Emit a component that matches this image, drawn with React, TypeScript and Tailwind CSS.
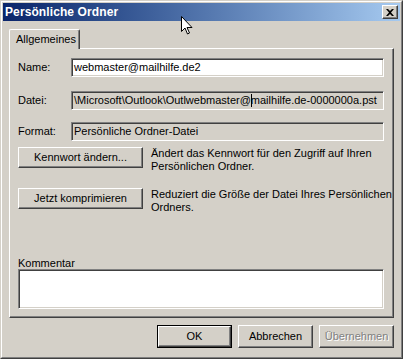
import React from "react"

const sunken =
  "border border-t-[#808080] border-l-[#808080] border-b-white border-r-white shadow-[inset_1px_1px_0_#404040,inset_-1px_-1px_0_#d4d0c8]"
const raised =
  "border border-t-white border-l-white border-b-[#404040] border-r-[#404040] shadow-[inset_-1px_-1px_0_#808080]"

const Field = ({ label, value, white }: { label: string; value: React.ReactNode; white?: boolean }) => (
  <div className="flex items-center h-[19px]">
    <div className="w-[53px] shrink-0">{label}</div>
    <div
      className={`flex-1 h-[19px] flex items-center pl-[2px] overflow-hidden whitespace-nowrap ${sunken} ${
        white ? "bg-white" : "bg-[#d4d0c8]"
      }`}
    >
      {value}
    </div>
  </div>
)

const ActionRow = ({ btn, text }: { btn: string; text: React.ReactNode }) => (
  <div className="flex items-start">
    <button className={`w-[125px] h-[21px] shrink-0 bg-[#d4d0c8] ${raised}`}>{btn}</button>
    <p className="ml-[8px] leading-[13px] whitespace-nowrap">{text}</p>
  </div>
)

const App = () => {
  return (
    <div
      className="w-[403px] h-[359px] bg-[#d4d0c8] border border-t-[#d4d0c8] border-l-[#d4d0c8] border-r-[#404040] border-b-[#404040] text-[11px] text-black relative"
      style={{ fontFamily: '"Liberation Sans", Arial, sans-serif' }}
    >
      <div className="w-full h-full border border-t-white border-l-white border-r-[#808080] border-b-[#808080] p-px flex flex-col">
        {/* title bar */}
        <div className="h-[18px] shrink-0 flex items-center justify-between pl-[2px] pr-[2px] bg-gradient-to-r from-[#0a246a] to-[#a6caf0]">
          <span className="text-white font-bold text-[12px] tracking-[0.1px]">Persönliche Ordner</span>
          <div className={`w-[16px] h-[14px] bg-[#d4d0c8] flex items-center justify-center ${raised}`}>
            <svg width="8" height="7" viewBox="0 0 8 7">
              <path d="M0 0h2l2 2 2-2h2L5 3.5 8 7H6L4 5 2 7H0l3-3.5z" fill="#000" />
            </svg>
          </div>
        </div>

        {/* tabs */}
        <div className="mt-[8px] px-[6px] flex flex-col">
          <div className="flex">
            <div className="relative z-10 -mb-px w-[71px] h-[20px] bg-[#d4d0c8] border border-b-0 border-t-white border-l-white border-r-[#404040] rounded-t-[2px] shadow-[inset_-1px_0_0_#808080] flex items-center pl-[6px]">
              Allgemeines
            </div>
          </div>
          <div className="h-[270px] w-[385px] border border-t-white border-l-white border-r-[#404040] border-b-[#404040] shadow-[inset_-1px_-1px_0_#808080] pl-[8px] pr-[9px] pt-[9px] flex flex-col">
            <Field label="Name:" value="webmaster@mailhilfe.de2" white />
            <div className="mt-[14px]">
              <Field
                label="Datei:"
                value={
                  <>
                    \Microsoft\Outlook\Outlwebmaster@
                    <span className="inline-block w-px h-[13px] bg-black -mr-px" />
                    mailhilfe.de-0000000a.pst
                  </>
                }
              />
            </div>
            <div className="mt-[12px]">
              <Field label="Format:" value="Persönliche Ordner-Datei" />
            </div>
            <div className="mt-[6px]">
              <ActionRow
                btn="Kennwort ändern..."
                text={
                  <>
                    Ändert das Kennwort für den Zugriff auf Ihren
                    <br />
                    Persönlichen Ordner.
                  </>
                }
              />
            </div>
            <div className="mt-[15px]">
              <ActionRow
                btn="Jetzt komprimieren"
                text={
                  <>
                    Reduziert die Größe der Datei Ihres Persönlichen
                    <br />
                    Ordners.
                  </>
                }
              />
            </div>
            <div className="mt-[43px] leading-[12px]">Kommentar</div>
            <div className={`h-[40px] bg-white ${sunken}`} />
          </div>
        </div>

        {/* bottom buttons */}
        <div className="mt-[7px] flex justify-end gap-[6px] pr-[6px]">
          <button className="w-[75px] h-[23px] border border-black bg-[#d4d0c8]">
            <div className={`w-full h-full flex items-center justify-center ${raised}`}>OK</div>
          </button>
          <button className={`w-[75px] h-[23px] bg-[#d4d0c8] ${raised}`}>Abbrechen</button>
          <button className={`w-[75px] h-[23px] bg-[#d4d0c8] text-[#808080] [text-shadow:1px_1px_0_#fff] ${raised}`}>
            Übernehmen
          </button>
        </div>
      </div>

      {/* mouse cursor */}
      <svg className="absolute left-[180px] top-[15px]" width="12" height="20" viewBox="0 0 12 20">
        <path d="M0.5 0.5v15l3.5-3.5 2.5 6 2-1-2.5-5.5h5z" fill="#fff" stroke="#000" strokeWidth="1" />
      </svg>
    </div>
  )
}

export default App
